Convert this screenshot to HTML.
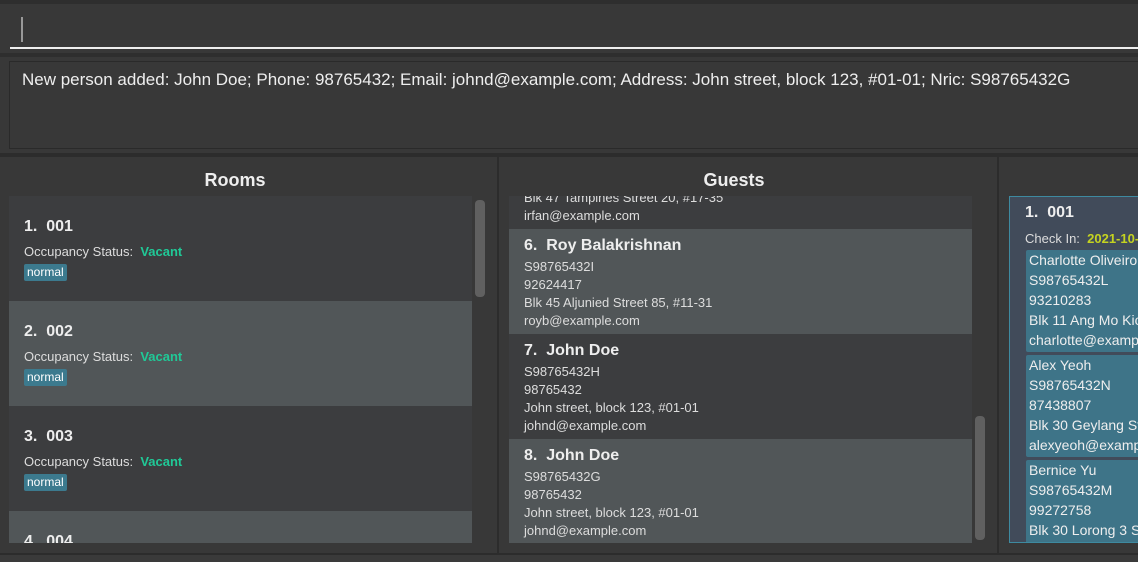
<!DOCTYPE html>
<html><head><style>
*{margin:0;padding:0;box-sizing:border-box}
html,body{width:1138px;height:562px;overflow:hidden}
body{background:#383838;font-family:"Liberation Sans",sans-serif;color:#fff;position:relative}
.a{position:absolute}
.t{font-size:13px;color:#ddd;white-space:nowrap}
.h{font-size:16px;font-weight:bold;color:#eee;white-space:nowrap}
.card{position:absolute;left:9px;width:463px;height:105px;overflow:hidden}
.d{background:#3c3d3f}.l{background:#515658}
.tag{position:absolute;left:15px;background:#3c7a8e;border-radius:2px;font-size:12px;color:#fff;padding:1px 3px;height:17px;line-height:15px}
.gb{position:absolute;left:16px;width:120px;background:#3e7488;border-radius:2px;overflow:hidden}
.gb div{font-size:14px;color:#eee;height:20px;line-height:20px;padding-left:3px;white-space:nowrap}
</style></head><body>
<div class="a" style="left:0;top:0;width:1138px;height:4px;background:#2e2e2e"></div>
<div class="a" style="left:0;top:53px;width:1138px;height:4px;background:#2e2e2e"></div>
<div class="a" style="left:21px;top:17px;width:2px;height:25px;background:#999"></div>
<div class="a" style="left:10px;top:47px;width:1128px;height:2px;background:#eee"></div>
<div class="a" style="left:9px;top:61px;width:1129px;height:88px;border:1px solid #2a2a2a;border-right:none"></div>
<div class="a" style="left:22px;top:70px;font-size:17px;color:#eee;white-space:nowrap">New person added: John Doe; Phone: 98765432; Email: johnd@example.com; Address: John street, block 123, #01-01; Nric: S98765432G</div>
<div class="a" style="left:0;top:153px;width:1138px;height:4px;background:#2c2c2c"></div>
<div class="a" style="left:497px;top:155px;width:2px;height:398px;background:#2c2c2c"></div>
<div class="a" style="left:997px;top:155px;width:2px;height:398px;background:#2c2c2c"></div>
<div class="a" style="left:0;top:553px;width:1138px;height:9px;background:#2c2c2c"></div>
<div class="a" style="left:0;top:555px;width:1138px;height:7px;background:#3a3a3a"></div>

<div class="a h" style="left:0;width:470px;top:170px;text-align:center;font-size:18px">Rooms</div>
<div class="a" style="left:9px;top:196px;width:463px;height:347px;overflow:hidden">
<div class="card d" style="left:0;top:0"><div class="a h" style="left:15px;top:22px">1.&nbsp; 001</div><div class="a t" style="left:15px;top:48px">Occupancy Status:&nbsp; <b style="color:#20c997">Vacant</b></div><div class="tag" style="top:68px">normal</div></div>
<div class="card l" style="left:0;top:105px"><div class="a h" style="left:15px;top:22px">2.&nbsp; 002</div><div class="a t" style="left:15px;top:48px">Occupancy Status:&nbsp; <b style="color:#20c997">Vacant</b></div><div class="tag" style="top:68px">normal</div></div>
<div class="card d" style="left:0;top:210px"><div class="a h" style="left:15px;top:22px">3.&nbsp; 003</div><div class="a t" style="left:15px;top:48px">Occupancy Status:&nbsp; <b style="color:#20c997">Vacant</b></div><div class="tag" style="top:68px">normal</div></div>
<div class="card l" style="left:0;top:315px"><div class="a h" style="left:15px;top:22px">4.&nbsp; 004</div></div>
</div>
<div class="a" style="left:475px;top:200px;width:10px;height:97px;background:#606060;border-radius:4px"></div>

<div class="a h" style="left:499px;width:470px;top:170px;text-align:center;font-size:18px">Guests</div>
<div class="a" style="left:509px;top:196px;width:463px;height:347px;overflow:hidden">
<div class="card d" style="left:0;top:-72px"><div class="a t" style="left:15px;top:66px">Blk 47 Tampines Street 20, #17-35</div><div class="a t" style="left:15px;top:84px">irfan@example.com</div></div>
<div class="card l" style="left:0;top:33px"><div class="a h" style="left:15px;top:8px">6.&nbsp; Roy Balakrishnan</div><div class="a t" style="left:15px;top:30px">S98765432I</div><div class="a t" style="left:15px;top:48px">92624417</div><div class="a t" style="left:15px;top:66px">Blk 45 Aljunied Street 85, #11-31</div><div class="a t" style="left:15px;top:84px">royb@example.com</div></div>
<div class="card d" style="left:0;top:138px"><div class="a h" style="left:15px;top:8px">7.&nbsp; John Doe</div><div class="a t" style="left:15px;top:30px">S98765432H</div><div class="a t" style="left:15px;top:48px">98765432</div><div class="a t" style="left:15px;top:66px">John street, block 123, #01-01</div><div class="a t" style="left:15px;top:84px">johnd@example.com</div></div>
<div class="card l" style="left:0;top:243px"><div class="a h" style="left:15px;top:8px">8.&nbsp; John Doe</div><div class="a t" style="left:15px;top:30px">S98765432G</div><div class="a t" style="left:15px;top:48px">98765432</div><div class="a t" style="left:15px;top:66px">John street, block 123, #01-01</div><div class="a t" style="left:15px;top:84px">johnd@example.com</div></div>
</div>
<div class="a" style="left:975px;top:416px;width:10px;height:124px;background:#606060;border-radius:4px"></div>

<div class="a" style="left:1009px;top:196px;width:129px;height:347px;background:#414b5a;border:1px solid #3e8aa0;border-right:none;overflow:hidden">
<div class="a h" style="left:15px;top:7px">1.&nbsp; 001</div>
<div class="a t" style="left:15px;top:34px">Check In:&nbsp; <b style="color:#c5d320">2021-10-20</b></div>
<div class="gb" style="top:53px;height:102px"><div>Charlotte Oliveiro</div><div>S98765432L</div><div>93210283</div><div>Blk 11 Ang Mo Kio</div><div>charlotte@example.com</div></div>
<div class="gb" style="top:158px;height:102px"><div>Alex Yeoh</div><div>S98765432N</div><div>87438807</div><div>Blk 30 Geylang Street</div><div>alexyeoh@example.com</div></div>
<div class="gb" style="top:263px;height:90px"><div>Bernice Yu</div><div>S98765432M</div><div>99272758</div><div>Blk 30 Lorong 3 Serangoon</div></div>
</div>
</body></html>
